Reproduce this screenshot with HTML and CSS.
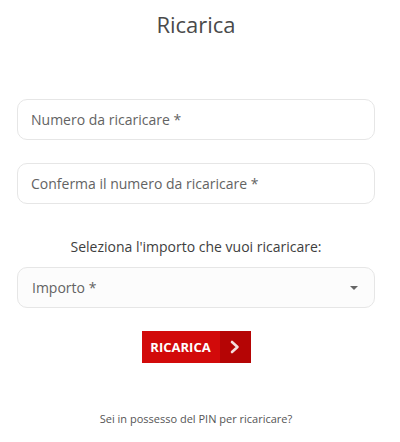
FILE: index.html
```html
<!DOCTYPE html>
<html>
<head>
  <meta charset="utf-8">
  <title>Ricarica</title>
  <link rel="stylesheet" href="styles.css">
</head>
<body>
  <div class="container">
    <h1 class="title">Ricarica</h1>

    <form class="recharge-form">
      <div class="field">
        <input type="text" class="text-input" placeholder="Numero da ricaricare *">
      </div>
      <div class="field">
        <input type="text" class="text-input" placeholder="Conferma il numero da ricaricare *">
      </div>

      <p class="amount-label">Seleziona l'importo che vuoi ricaricare:</p>

      <div class="select-box">
        <span class="select-placeholder">Importo *</span>
        <span class="select-arrow"></span>
      </div>

      <div class="actions">
        <button type="button" class="btn-recharge">
          <span class="btn-label">RICARICA</span>
          <span class="btn-icon">
            <svg width="12" height="14" viewBox="0 0 12 14">
              <path d="M3 2 L8.5 7 L3 12" fill="none" stroke="#f4dede" stroke-width="2.6" stroke-linecap="round" stroke-linejoin="round"/>
            </svg>
          </span>
        </button>
      </div>
    </form>

    <p class="pin-link">Sei in possesso del PIN per ricaricare?</p>
  </div>
</body>
</html>
```

FILE: styles.css
```css
body {
  font-family: "Open Sans", "DejaVu Sans", sans-serif;
  margin: 0;
  background: #ffffff;
  color: #444;
}

.container {
  padding: 0 25px 0 17px;
}

.title {
  margin: 0;
  padding-top: 9px;
  font-size: 22px;
  font-weight: 400;
  color: #4a4a4a;
  text-align: center;
  height: 99px;
  box-sizing: border-box;
}

.recharge-form {
  display: flex;
  flex-direction: column;
}

.field {
  margin-bottom: 23px;
}

.text-input {
  width: 100%;
  height: 41px;
  box-sizing: border-box;
  border: 1px solid #e6e6e6;
  border-radius: 10px;
  padding: 0 13px;
  font-family: inherit;
  font-size: 14px;
  background: #fff;
}

.text-input::placeholder {
  color: #636363;
}

.amount-label {
  margin: 10px 0 11px;
  text-align: center;
  font-size: 14px;
  color: #3e3e3e;
}

.select-box {
  height: 41px;
  box-sizing: border-box;
  border: 1px solid #e6e6e6;
  border-radius: 10px;
  background: #fcfcfc;
  padding: 0 14px;
  display: flex;
  align-items: center;
  justify-content: space-between;
}

.select-placeholder {
  font-size: 14px;
  color: #636363;
}

.select-arrow {
  width: 0;
  height: 0;
  border-left: 4px solid transparent;
  border-right: 4px solid transparent;
  border-top: 4px solid #666;
  margin-right: 2px;
}

.actions {
  display: flex;
  justify-content: center;
  margin-top: 23px;
}

.btn-recharge {
  display: flex;
  padding: 0;
  border: none;
  height: 32px;
  background: #d20a0a;
  cursor: pointer;
  font-family: inherit;
}

.btn-label {
  width: 78px;
  display: flex;
  align-items: center;
  justify-content: center;
  color: #ffffff;
  font-size: 13px;
  font-weight: 700;
}

.btn-icon {
  width: 31px;
  display: flex;
  align-items: center;
  justify-content: center;
  background: #b50505;
}

.pin-link {
  margin: 48px 0 0;
  text-align: center;
  font-size: 11px;
  color: #555;
}
```
